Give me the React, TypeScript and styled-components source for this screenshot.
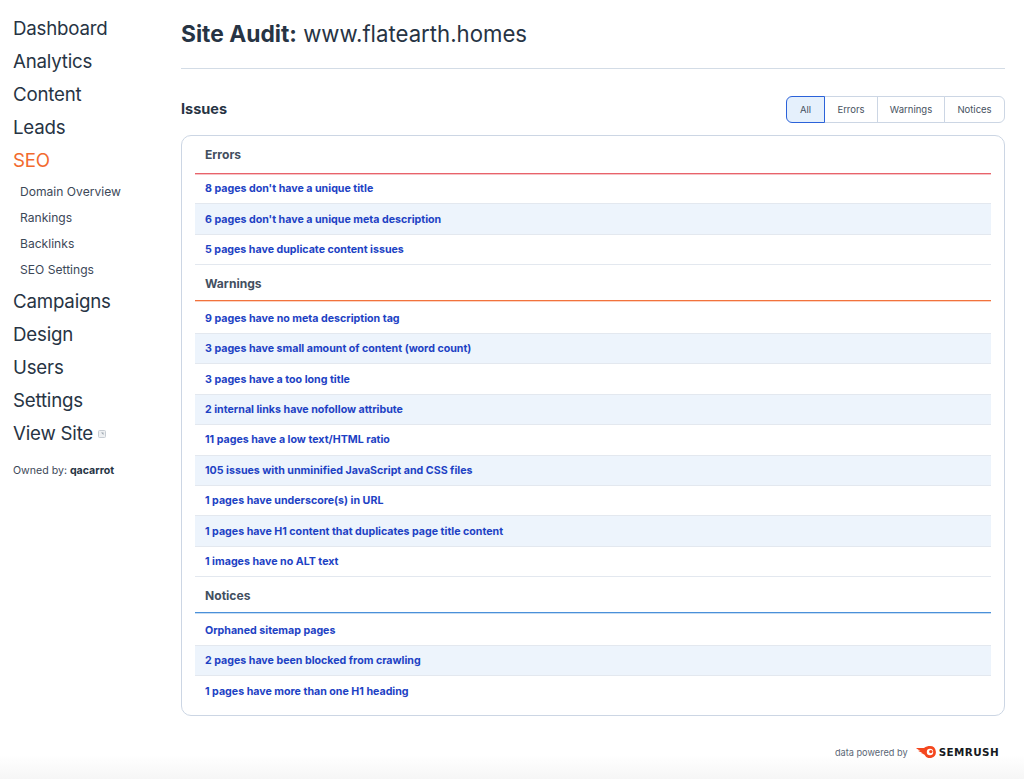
import React from 'react'
import styled, { createGlobalStyle } from 'styled-components'

const GlobalStyle = createGlobalStyle`
  html, body {
    margin: 0;
    padding: 0;
    background: #ffffff;
    font-family: Inter, 'Liberation Sans', sans-serif;
    color: #1f2d3d;
  }
`

const Page = styled.div`
  position: relative;
  display: flex;
  width: 1024px;
  height: 779px;
  overflow: hidden;
  background: linear-gradient(to bottom, #ffffff 0, #ffffff 755px, #f6f6f6 779px);
`

const Sidebar = styled.nav`
  flex: none;
  width: 181px;
  box-sizing: border-box;
  padding: 12px 0 0 13px;
`

const NavItem = styled.div<{ $active?: boolean }>`
  display: flex;
  align-items: center;
  height: 33px;
  font-size: 18.7px;
  letter-spacing: -0.2px;
  color: ${(props) => (props.$active ? '#f26a2e' : '#273444')};
`

const SubNav = styled.div`
  padding: 1px 0 1.8px 7px;
`

const SubNavItem = styled.div`
  display: flex;
  align-items: center;
  height: 26.2px;
  font-size: 12.1px;
  color: #3c4858;
`

const ExternalIcon = styled.svg`
  width: 8px;
  height: 8px;
  margin-left: 5px;
  margin-top: 2px;
`

const Owner = styled.div`
  margin-top: 14.5px;
  font-size: 10.6px;
  color: #3c4858;

  b {
    font-weight: 700;
    color: #273444;
  }
`

const Main = styled.main`
  width: 824px;
  display: flex;
  flex-direction: column;
`

const Header = styled.header`
  height: 69px;
  box-sizing: border-box;
  padding-top: 19px;
  border-bottom: 1px solid #d3dce6;
  font-size: 22.2px;
  line-height: 30px;
  color: #273444;

  b {
    font-size: 22.8px;
    font-weight: 700;
  }
`

const IssuesBar = styled.div`
  display: flex;
  align-items: center;
  justify-content: space-between;
  height: 28px;
  margin-top: 26px;
`

const IssuesTitle = styled.h2`
  margin: 0 0 2px;
  font-size: 14.5px;
  font-weight: 700;
  color: #273444;
`

const FilterGroup = styled.div`
  display: flex;
  height: 27px;
`

const FilterButton = styled.button<{ $active?: boolean; $width: number }>`
  box-sizing: border-box;
  height: 100%;
  padding: 0;
  width: ${(props) => props.$width}px;
  margin-left: -1px;
  font-family: inherit;
  font-size: 9.5px;
  color: #47525f;
  background: ${(props) => (props.$active ? '#e5f0fc' : '#ffffff')};
  border: 1px solid ${(props) => (props.$active ? '#2b62d9' : '#ccd6e4')};
  position: relative;
  z-index: ${(props) => (props.$active ? 1 : 0)};

  &:first-child {
    border-radius: 6px 0 0 6px;
  }

  &:last-child {
    border-radius: 0 6px 6px 0;
  }
`

const Card = styled.section`
  box-sizing: border-box;
  height: 581px;
  margin-top: 12px;
  padding: 0 13px;
  border: 1px solid #ccd6e4;
  border-radius: 10px;
`

const SectionHead = styled.div<{ $color: string; $soft: string }>`
  display: flex;
  align-items: center;
  height: 34px;
  padding: 1px 0 0 10px;
  margin-bottom: 2.5px;
  font-size: 12.1px;
  font-weight: 700;
  color: #434f5f;
  border-bottom: 1px solid ${(props) => props.$color};
  box-shadow: 0 1px 0 ${(props) => props.$soft};

  &:first-child {
    height: 37px;
    padding-top: 0;
    margin-bottom: 0;
  }
`

const Row = styled.div`
  display: flex;
  align-items: center;
  box-sizing: border-box;
  height: 30.4px;
  padding-left: 10px;
  font-size: 10.65px;
  font-weight: 700;
  color: #1d42c4;
  border-bottom: 1px solid #e3e8ef;

  &:nth-child(even) {
    background: #edf4fc;
  }
`

const Rows = styled.div`
  &:last-child ${Row}:last-child {
    border-bottom-color: transparent;
  }
`

const Credit = styled.div`
  position: absolute;
  right: 25px;
  top: 744px;
  display: flex;
  align-items: center;
  height: 16px;
  font-size: 9.2px;
  color: #5a6675;
`

const Brand = styled.span`
  margin-left: 3px;
  font-family: 'DejaVu Sans', sans-serif;
  font-size: 10.4px;
  font-weight: 700;
  letter-spacing: 0.4px;
  color: #171a22;
`

const Flame = styled.svg`
  width: 20px;
  height: 12px;
  margin-left: 8px;
`

const sections = [
  {
    title: 'Errors',
    color: '#e8636b',
    soft: '#f6c3c6',
    rows: ["8 pages don't have a unique title", "6 pages don't have a unique meta description", '5 pages have duplicate content issues'],
  },
  {
    title: 'Warnings',
    color: '#f2723c',
    soft: '#fbd3c2',
    rows: [
      '9 pages have no meta description tag',
      '3 pages have small amount of content (word count)',
      '3 pages have a too long title',
      '2 internal links have nofollow attribute',
      '11 pages have a low text/HTML ratio',
      '105 issues with unminified JavaScript and CSS files',
      '1 pages have underscore(s) in URL',
      '1 pages have H1 content that duplicates page title content',
      '1 images have no ALT text',
    ],
  },
  {
    title: 'Notices',
    color: '#4a90d9',
    soft: '#c6ddf3',
    rows: ['Orphaned sitemap pages', '2 pages have been blocked from crawling', '1 pages have more than one H1 heading'],
  },
]

const filters = [
  { label: 'All', width: 39, active: true },
  { label: 'Errors', width: 54 },
  { label: 'Warnings', width: 68 },
  { label: 'Notices', width: 61 },
]

const App: React.FC = () => {
  return (
    <Page>
      <GlobalStyle />
      <Sidebar>
        <NavItem>Dashboard</NavItem>
        <NavItem>Analytics</NavItem>
        <NavItem>Content</NavItem>
        <NavItem>Leads</NavItem>
        <NavItem $active>SEO</NavItem>
        <SubNav>
          <SubNavItem>Domain Overview</SubNavItem>
          <SubNavItem>Rankings</SubNavItem>
          <SubNavItem>Backlinks</SubNavItem>
          <SubNavItem>SEO Settings</SubNavItem>
        </SubNav>
        <NavItem>Campaigns</NavItem>
        <NavItem>Design</NavItem>
        <NavItem>Users</NavItem>
        <NavItem>Settings</NavItem>
        <NavItem>
          View Site
          <ExternalIcon viewBox="0 0 8 8">
            <rect x="0.5" y="0.5" width="7" height="7" rx="1" fill="#eef0f2" stroke="#c6ccd3" />
            <path d="M3 2.5h2.5V5z" fill="#9aa3ad" />
          </ExternalIcon>
        </NavItem>
        <Owner>
          Owned by: <b>qacarrot</b>
        </Owner>
      </Sidebar>
      <Main>
        <Header>
          <b>Site Audit:</b> www.flatearth.homes
        </Header>
        <IssuesBar>
          <IssuesTitle>Issues</IssuesTitle>
          <FilterGroup>
            {filters.map((f) => (
              <FilterButton key={f.label} $active={f.active} $width={f.width}>
                {f.label}
              </FilterButton>
            ))}
          </FilterGroup>
        </IssuesBar>
        <Card>
          {sections.map((s) => (
            <React.Fragment key={s.title}>
              <SectionHead $color={s.color} $soft={s.soft}>
                {s.title}
              </SectionHead>
              <Rows>
                {s.rows.map((r) => (
                  <Row key={r}>{r}</Row>
                ))}
              </Rows>
            </React.Fragment>
          ))}
        </Card>
      </Main>
      <Credit>
        data powered by
        <Flame viewBox="0 0 20 12">
          <path
            d="M0 2h8C10 .6 12 0 14 0a6 6 0 1 1-5.500 8.700C7.600 8.200 6.500 7.800 4.500 7.600H7C5.500 6.400 3.500 5.800 2 4.800h2.500C3 4.200 1 3.200 0 2z"
            fill="#f4471e"
          />
          <circle cx="14" cy="6" r="3.200" fill="#ffffff" />
          <circle cx="14.800" cy="5.600" r="1.700" fill="#f4471e" />
        </Flame>
        <Brand>SEMRUSH</Brand>
      </Credit>
    </Page>
  )
}

export default App
